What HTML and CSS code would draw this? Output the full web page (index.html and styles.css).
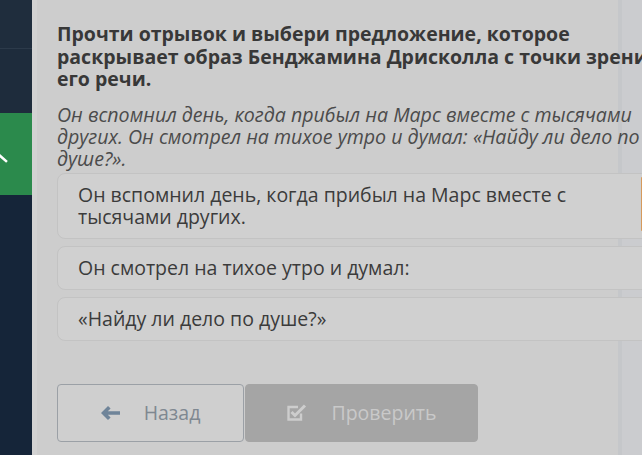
FILE: index.html
```html
<!DOCTYPE html>
<html lang="ru">
<head>
<meta charset="utf-8">
<link rel="stylesheet" href="styles.css">
</head>
<body>
<aside class="sidebar">
  <div class="nav-top"></div>
  <div class="nav-mid"></div>
  <div class="nav-active">
    <svg class="chev" width="10" height="14" viewBox="0 0 10 14"><path d="M-2 4 L6 11" stroke="#ffffff" stroke-width="2.6" fill="none" stroke-linecap="square"/></svg>
  </div>
  <div class="nav-rest"></div>
</aside>
<main class="content">
  <h1 class="title">Прочти отрывок и выбери предложение, которое раскрывает образ Бенджамина Дрисколла с точки зрения его речи.</h1>
  <p class="passage">Он вспомнил день, когда прибыл на Марс вместе с тысячами других. Он смотрел на тихое утро и думал: «Найду ли дело по душе?».</p>
  <div class="answers">
    <div class="answer answer-first"><span class="answer-text">Он вспомнил день, когда прибыл на Марс вместе с тысячами других.</span><span class="handle"></span></div>
    <div class="answer"><span class="answer-text">Он смотрел на тихое утро и думал:</span></div>
    <div class="answer"><span class="answer-text">«Найду ли дело по душе?»</span></div>
  </div>
  <div class="buttons">
    <button class="btn btn-back">
      <svg width="20" height="14" viewBox="0 0 20 14"><path d="M0 7 L7 0 L9.6 2.6 L6.8 5.2 H19 V8.8 H6.8 L9.6 11.4 L7 14 Z" fill="#6f8499"/></svg>
      <span>Назад</span>
    </button>
    <button class="btn btn-check">
      <svg width="22" height="18" viewBox="0 0 22 18"><path d="M15 9.5 V15.5 H2.5 V3 H12" stroke="#cdcdcd" stroke-width="2.4" fill="none"/><path d="M5.5 8 L9 11.5 L19 1.5" stroke="#cdcdcd" stroke-width="3" fill="none"/></svg>
      <span>Проверить</span>
    </button>
  </div>
</main>
</body>
</html>
```
FILE: styles.css
```css
html, body {
  margin: 0;
  padding: 0;
}
body {
  display: flex;
  width: 642px;
  height: 455px;
  overflow: hidden;
  font-family: "Open Sans", "Noto Sans", sans-serif;
  background: #cdcdcd;
}
.sidebar {
  width: 32px;
  flex: none;
  display: flex;
  flex-direction: column;
  background: #172638;
}
.nav-top {
  height: 48px;
  background: #1f2d3d;
  border-bottom: 1px solid #2c3a4a;
}
.nav-mid {
  height: 64px;
  background: #1e2c3c;
}
.nav-active {
  height: 82px;
  background: #2b8a4c;
  display: flex;
  align-items: center;
  justify-content: flex-start;
}
.chev {
  display: block;
  margin-top: 6px;
}
.nav-rest {
  flex: 1;
  background: #152539;
}
.content {
  flex: 1;
  min-width: 0;
  padding: 23px 0 0 25px;
  background: linear-gradient(to right, #d2d2d2 0, #d2d2d2 5px, #cdcdcd 5px, #cdcdcd 586px, #c5c7ca 586px, #c5c7ca 590px, #cbcccf 590px);
  overflow: hidden;
}
.title {
  margin: 0;
  width: 610px;
  font-size: 19.5px;
  line-height: 22.5px;
  font-weight: 700;
  color: #383838;
}
.passage {
  margin: 13px 0 0;
  width: 595px;
  font-size: 19.6px;
  line-height: 22px;
  font-style: italic;
  color: #4b4b4b;
}
.answers {
  margin-top: 3px;
  display: flex;
  flex-direction: column;
  gap: 7px;
  width: 640px;
}
.answer {
  display: flex;
  justify-content: space-between;
  border: 1px solid #c3c3c3;
  border-radius: 8px;
  background: #d0d0d0;
  padding: 10px 20px 10px 20px;
  font-size: 19.5px;
  line-height: 22px;
  color: #3b3b3b;
}
.answer-text {
  max-width: 520px;
}
.handle {
  width: 2px;
  align-self: stretch;
  margin: -7px 33px -3px 0;
  background: #d69a5c;
  border-radius: 1px;
}
.buttons {
  margin-top: 43px;
  display: flex;
  gap: 1px;
}
.btn {
  height: 58px;
  display: flex;
  align-items: center;
  justify-content: center;
  gap: 23px;
  font-family: "Open Sans", "Noto Sans", sans-serif;
  font-size: 19.5px;
  border-radius: 4px;
  padding: 0;
}
.btn svg {
  display: block;
  flex: none;
}
.btn-back {
  width: 187px;
  background: #cfcfcf;
  border: 1px solid #9ba0a6;
  color: #7f8891;
}
.btn-check {
  width: 233px;
  background: #a5a5a5;
  border: 1px solid #a5a5a5;
  color: #c9c9c9;
}
```
